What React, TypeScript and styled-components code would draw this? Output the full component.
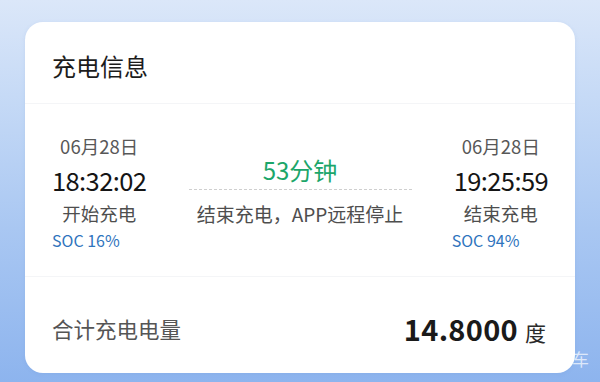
import React from 'react';
import styled, { createGlobalStyle } from 'styled-components';

const GlobalStyle = createGlobalStyle`
  html, body {
    margin: 0;
    padding: 0;
  }
  body {
    font-family: "Noto Sans CJK SC", "Noto Sans", sans-serif;
  }
`;

const Page = styled.div`
  position: relative;
  width: 600px;
  height: 382px;
  overflow: hidden;
  box-sizing: border-box;
  padding: 22px 25px 0 25px;
  background: linear-gradient(180deg, #dbe7f9 0%, #c6daf6 25%, #a9c7f2 60%, #8db4ee 100%);
`;

const Card = styled.div`
  height: 351px;
  background: #ffffff;
  border-radius: 18px;
  box-shadow: 0 1px 4px rgba(90, 130, 200, 0.12);
  display: flex;
  flex-direction: column;
`;

const Header = styled.div`
  height: 82px;
  display: flex;
  align-items: center;
  padding: 0 27px;
  border-bottom: 1px solid #f4f5f7;
  box-sizing: border-box;
`;

const Title = styled.div`
  font-size: 24px;
  color: #1c1c1c;
  line-height: 30px;
  margin-top: 6px;
`;

const Body = styled.div`
  height: 173px;
  display: flex;
  align-items: center;
  justify-content: space-between;
  padding: 0 27px;
  border-bottom: 1px solid #f4f5f7;
  box-sizing: border-box;
`;

const Side = styled.div`
  display: flex;
  flex-direction: column;
  align-items: stretch;
  margin-top: 3px;
`;

const DateText = styled.div`
  font-size: 18.5px;
  line-height: 24px;
  color: #585858;
  text-align: center;
`;

const TimeText = styled.div`
  font-size: 25.5px;
  letter-spacing: -0.6px;
  line-height: 36px;
  color: #151515;
  text-align: center;
  margin-top: 4px;
`;

const Label = styled.div`
  font-size: 18.5px;
  line-height: 24px;
  color: #4e4e4e;
  text-align: center;
  margin-top: 3px;
`;

const Soc = styled.div<{ $shift?: number }>`
  font-size: 16px;
  line-height: 20px;
  color: #2f74bd;
  text-align: left;
  margin-top: 5px;
  margin-left: ${p => p.$shift ?? 0}px;
`;

const Middle = styled.div`
  width: 223px;
  display: flex;
  flex-direction: column;
  align-items: center;
`;

const Duration = styled.div`
  font-size: 24px;
  line-height: 30px;
  color: #1ca66a;
`;

const Dash = styled.div`
  width: 100%;
  margin-top: 4px;
  border-top: 1px dashed #cfcfcf;
`;

const Reason = styled.div`
  font-size: 19px;
  line-height: 24px;
  color: #4e4e4e;
  margin-top: 12px;
  white-space: nowrap;
`;

const Footer = styled.div`
  flex: 1;
  display: flex;
  align-items: center;
  justify-content: space-between;
  padding: 8px 29px 0 27px;
`;

const TotalLabel = styled.div`
  font-size: 21.5px;
  line-height: 28px;
  color: #555555;
`;

const Amount = styled.div`
  display: flex;
  align-items: baseline;
  gap: 7px;
`;

const AmountValue = styled.span`
  font-size: 29px;
  font-weight: 700;
  color: #1a1a1a;
  line-height: 34px;
  letter-spacing: 0.3px;
`;

const Unit = styled.span`
  font-size: 21px;
  color: #2a2a2a;
`;

const Watermark = styled.div`
  position: absolute;
  right: 11px;
  bottom: 11px;
  font-size: 17px;
  color: rgba(255, 255, 255, 0.7);
`;

export default function App() {
  return (
    <>
      <GlobalStyle />
      <Page>
        <Card>
          <Header>
            <Title>充电信息</Title>
          </Header>
          <Body>
            <Side>
              <DateText>06月28日</DateText>
              <TimeText>18:32:02</TimeText>
              <Label>开始充电</Label>
              <Soc>SOC 16%</Soc>
            </Side>
            <Middle>
              <Duration>53分钟</Duration>
              <Dash />
              <Reason>结束充电，APP远程停止</Reason>
            </Middle>
            <Side>
              <DateText>06月28日</DateText>
              <TimeText>19:25:59</TimeText>
              <Label>结束充电</Label>
              <Soc $shift={-2}>SOC 94%</Soc>
            </Side>
          </Body>
          <Footer>
            <TotalLabel>合计充电电量</TotalLabel>
            <Amount>
              <AmountValue>14.8000</AmountValue>
              <Unit>度</Unit>
            </Amount>
          </Footer>
        </Card>
        <Watermark>车</Watermark>
      </Page>
    </>
  );
}
